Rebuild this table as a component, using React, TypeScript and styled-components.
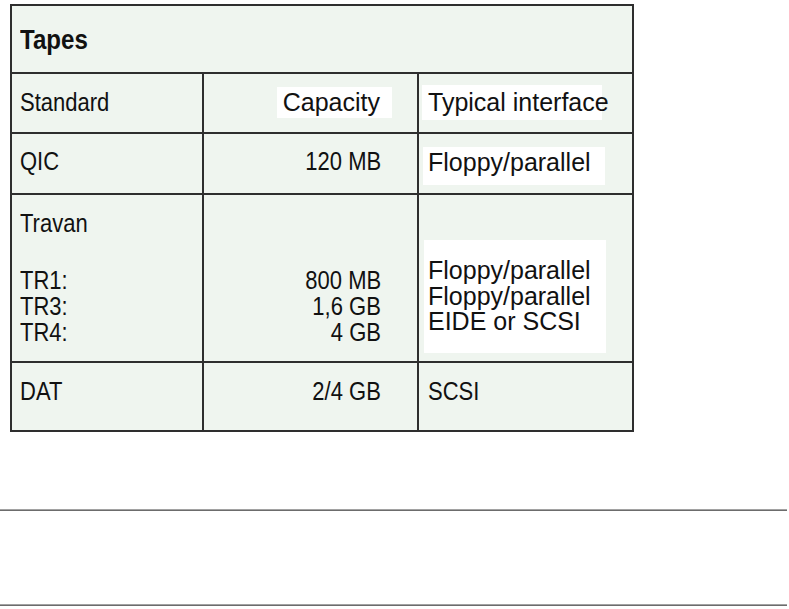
import React from "react";
import styled, { createGlobalStyle } from "styled-components";

const Global = createGlobalStyle`
  html, body { margin: 0; padding: 0; background: #ffffff; }
  body { font-family: "Liberation Sans", Arial, sans-serif; color: #111; }
`;

const Page = styled.div`
  padding-top: 4px;
  width: 789px;
`;

const Table = styled.div`
  margin-left: 10px;
  width: 624px;
  box-sizing: border-box;
  display: grid;
  grid-template-columns: 190px 213px 213px;
  grid-template-rows: 66px 58px 59px 166px 67px;
  gap: 2px;
  padding: 2px;
  background: #2e2e2e;
`;

const Cell = styled.div<{ $pt: number; $align?: "start" | "end"; $pl?: number; $pr?: number; $span?: number }>`
  background: #eff5ef;
  box-sizing: border-box;
  padding-top: ${(p) => p.$pt}px;
  padding-left: ${(p) => p.$pl ?? 0}px;
  padding-right: ${(p) => p.$pr ?? 0}px;
  display: flex;
  flex-direction: column;
  align-items: ${(p) => (p.$align === "end" ? "flex-end" : "flex-start")};
  grid-column: ${(p) => (p.$span ? `span ${p.$span}` : "auto")};
`;

const Title = styled.span`
  display: inline-block;
  font-weight: bold;
  font-size: 28px;
  line-height: 32px;
  transform: scaleX(0.86);
  transform-origin: left center;
  white-space: nowrap;
`;

const Narrow = styled.span<{ $right?: boolean }>`
  display: inline-block;
  font-size: 25px;
  line-height: 26px;
  transform: scaleX(0.88);
  transform-origin: ${(p) => (p.$right ? "right" : "left")} center;
  white-space: nowrap;
`;

const Stack = styled.div<{ $mt?: number; $align?: "start" | "end" }>`
  display: flex;
  flex-direction: column;
  align-items: ${(p) => (p.$align === "end" ? "flex-end" : "flex-start")};
  margin-top: ${(p) => p.$mt ?? 0}px;
`;

const Label = styled.div<{ $mt: number; $ml?: number; $mr?: number; $width?: number; $pl: number; $pr?: number; $lh: number; $pb?: number; $ptop?: number }>`
  background: #ffffff;
  box-sizing: border-box;
  margin-top: ${(p) => p.$mt}px;
  margin-left: ${(p) => p.$ml ?? 0}px;
  margin-right: ${(p) => p.$mr ?? 0}px;
  ${(p) => (p.$width ? `width: ${p.$width}px;` : "")}
  padding: ${(p) => p.$ptop ?? 0}px ${(p) => p.$pr ?? 0}px ${(p) => p.$pb ?? 0}px ${(p) => p.$pl}px;
  font-size: 25px;
  line-height: ${(p) => p.$lh}px;
  white-space: nowrap;
`;

const Rule = styled.div<{ $mt: number }>`
  margin-top: ${(p) => p.$mt}px;
  width: 787px;
  height: 0;
  border-top: 1px solid #a2a2a2;
  border-bottom: 1px solid #6c6c6c;
`;

export default function App() {
  return (
    <>
      <Global />
      <Page>
        <Table>
          <Cell $pt={18} $pl={8} $span={3}>
            <Title>Tapes</Title>
          </Cell>

          <Cell $pt={15} $pl={8}>
            <Narrow>Standard</Narrow>
          </Cell>
          <Cell $pt={13} $align="end">
            <Label $mt={0} $mr={25} $pl={6} $pr={12} $lh={31}>
              Capacity
            </Label>
          </Cell>
          <Cell $pt={11}>
            <Label $mt={0} $ml={3} $width={180} $pl={6} $lh={35}>
              Typical interface
            </Label>
          </Cell>

          <Cell $pt={14} $pl={8}>
            <Narrow>QIC</Narrow>
          </Cell>
          <Cell $pt={14} $align="end" $pr={36}>
            <Narrow $right>120 MB</Narrow>
          </Cell>
          <Cell $pt={13}>
            <Label $mt={0} $ml={4} $width={182} $pl={5} $lh={31} $pb={7}>
              Floppy/parallel
            </Label>
          </Cell>

          <Cell $pt={15} $pl={8}>
            <Narrow>Travan</Narrow>
            <Stack $mt={31}>
              <Narrow>TR1:</Narrow>
              <Narrow>TR3:</Narrow>
              <Narrow>TR4:</Narrow>
            </Stack>
          </Cell>
          <Cell $pt={72} $align="end" $pr={36}>
            <Narrow $right>800 MB</Narrow>
            <Narrow $right>1,6 GB</Narrow>
            <Narrow $right>4 GB</Narrow>
          </Cell>
          <Cell $pt={45}>
            <Label $mt={0} $ml={5} $width={182} $pl={4} $lh={25.5} $ptop={18} $pb={18}>
              Floppy/parallel
              <br />
              Floppy/parallel
              <br />
              EIDE or SCSI
            </Label>
          </Cell>

          <Cell $pt={15} $pl={8}>
            <Narrow>DAT</Narrow>
          </Cell>
          <Cell $pt={15} $align="end" $pr={36}>
            <Narrow $right>2/4 GB</Narrow>
          </Cell>
          <Cell $pt={15} $pl={9}>
            <Narrow>SCSI</Narrow>
          </Cell>
        </Table>
        <Rule $mt={77} />
        <Rule $mt={93} />
      </Page>
    </>
  );
}
